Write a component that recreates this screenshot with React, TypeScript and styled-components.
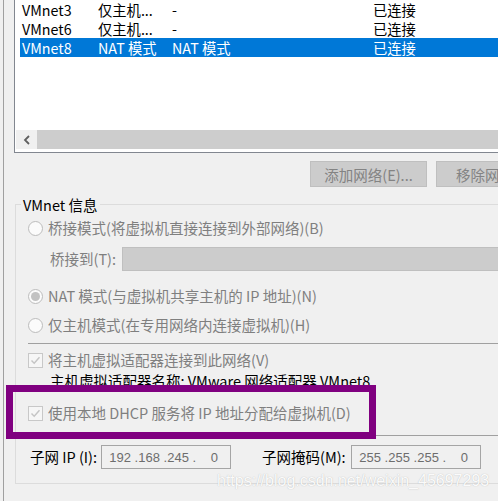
import React from "react";
import styled, { createGlobalStyle } from "styled-components";

const Global = createGlobalStyle`
  html, body { margin: 0; padding: 0; width: 498px; height: 501px; overflow: hidden; background: #f0f0f0; }
  #root { width: 498px; height: 501px; }
  * { box-sizing: border-box; }
`;

const FONT = `"Noto Sans CJK SC", "Microsoft YaHei", sans-serif`;

const Page = styled.div`
  position: relative;
  width: 498px;
  height: 501px;
  overflow: hidden;
  font-family: ${FONT};
  font-size: 14.5px;
  color: #000;
  background: #f0f0f0;
`;

const Frame = styled.div`
  margin-left: 3px;
  height: 501px;
  border-left: 1px solid #a0a0a0;
  display: flex;
  flex-direction: column;
`;

/* ---------- list view ---------- */
const ListBox = styled.div`
  flex: none;
  margin-left: 10px;
  width: 520px;
  height: 153px;
  background: #fff;
  border-left: 1px solid #828790;
  border-bottom: 1px solid #828790;
  display: flex;
  flex-direction: column;
  padding-bottom: 3px;
`;

const ListRows = styled.div`
  display: flex;
  flex-direction: column;
  padding-left: 5px;
`;

const ListRow = styled.div<{ $selected?: boolean }>`
  display: flex;
  align-items: center;
  height: 19px;
  line-height: 19px;
  font-size: 14.3px;
  white-space: nowrap;
  background: ${(p) => (p.$selected ? "#0078d7" : "transparent")};
  color: ${(p) => (p.$selected ? "#ffffff" : "#000000")};
`;

const Cell = styled.div<{ $w: number }>`
  flex: none;
  width: ${(p) => p.$w}px;
  padding-left: 2px;
  overflow: hidden;
`;

const HScroll = styled.div`
  margin-top: auto;
  margin-left: 1px;
  height: 19px;
  display: flex;
`;

const ScrollArrow = styled.div`
  width: 21px;
  background: #f0f0f0;
  display: flex;
  align-items: center;
  justify-content: center;
`;

const ScrollTrack = styled.div`
  flex: 1;
  background: #cdcdcd;
`;

/* ---------- buttons ---------- */
const ButtonRow = styled.div`
  flex: none;
  display: flex;
  gap: 9px;
  margin-top: 8px;
  padding-left: 306px;
`;

const Btn = styled.div`
  flex: none;
  width: 117px;
  height: 26px;
  background: #cccccc;
  border: 1px solid #bfbfbf;
  color: #838383;
  display: flex;
  align-items: center;
  justify-content: center;
  white-space: nowrap;
`;

/* ---------- group box ---------- */
const GroupBox = styled.div`
  flex: none;
  margin-top: 17px;
  margin-left: 11px;
  width: 520px;
  height: 280px;
  border: 1px solid #dcdcdc;
  display: flex;
  flex-direction: column;
`;

const Caption = styled.div`
  align-self: flex-start;
  margin-top: -10px;
  margin-left: 5px;
  padding: 0 2px;
  height: 20px;
  line-height: 20px;
  background: #f0f0f0;
  color: #000;
  white-space: nowrap;
`;

const Row = styled.div<{ $h?: number; $mt: number; $pl: number }>`
  flex: none;
  display: flex;
  align-items: center;
  height: ${(p) => p.$h ?? 20}px;
  margin-top: ${(p) => p.$mt}px;
  padding-left: ${(p) => p.$pl}px;
  white-space: nowrap;
`;

const Label = styled.span<{ $dim?: boolean; $w?: number }>`
  color: ${(p) => (p.$dim ? "#7f7f7f" : "#000")};
  ${(p) => (p.$w ? `width: ${p.$w}px; flex: none;` : "")}
  line-height: 20px;
`;

const RadioCircle = styled.span<{ $checked?: boolean }>`
  flex: none;
  width: 15px;
  height: 15px;
  margin-right: 5px;
  border-radius: 50%;
  border: 1px solid #bcbcbc;
  background: #fbfbfb;
  display: flex;
  align-items: center;
  justify-content: center;
  &::after {
    content: "";
    width: 9px;
    height: 9px;
    border-radius: 50%;
    background: ${(p) => (p.$checked ? "#c2c2c2" : "transparent")};
  }
`;

const CheckBoxBox = styled.span`
  flex: none;
  width: 15px;
  height: 15px;
  margin-right: 5px;
  border: 1px solid #c8c8c8;
  background: #f6f6f6;
  display: flex;
  align-items: center;
  justify-content: center;
`;

const Combo = styled.div`
  flex: none;
  width: 400px;
  height: 24px;
  background: #cccccc;
  border: 1px solid #bfbfbf;
`;

const Separator = styled.div<{ $mt: number }>`
  flex: none;
  margin-top: ${(p) => p.$mt}px;
  margin-left: 12px;
  height: 1px;
  background: #a0a0a0;
`;

const IpBox = styled.div`
  flex: none;
  width: 130px;
  height: 24px;
  border: 1px solid #a5a5a5;
  background: #f0f0f0;
  display: flex;
  align-items: center;
  padding-left: 7px;
  font-family: "Liberation Sans", Arial, sans-serif;
  font-size: 13px;
  color: #6d6d6d;
`;

const IpField = styled.span`
  flex: none;
  width: 22px;
  text-align: right;
`;

const IpDot = styled.span`
  flex: none;
  width: 7px;
  text-align: right;
`;

const Gap = styled.span<{ $w: number }>`
  flex: none;
  width: ${(p) => p.$w}px;
`;

/* ---------- overlays ---------- */
const Highlight = styled.div`
  position: absolute;
  left: 6px;
  top: 385px;
  width: 370px;
  height: 54px;
  border: 7px solid #800080;
  pointer-events: none;
`;

const Watermark = styled.div`
  position: absolute;
  left: 217px;
  top: 472px;
  font-family: "Liberation Sans", Arial, sans-serif;
  font-size: 16px;
  line-height: 18px;
  color: rgba(255, 255, 255, 0.95);
  text-shadow: 0 0 1px rgba(140, 140, 140, 0.6);
  white-space: nowrap;
`;

const Check = () => (
  <svg width="11" height="11" viewBox="0 0 11 11">
    <polyline points="1.5,5.5 4.2,8.3 9.5,2.2" fill="none" stroke="#c4c4c4" strokeWidth="1.4" />
  </svg>
);

const Chevron = () => (
  <svg width="8" height="10" viewBox="0 0 8 10">
    <polyline points="6,1 2,5 6,9" fill="none" stroke="#606060" strokeWidth="1.8" />
  </svg>
);

const rows = [
  { name: "VMnet3", type: "仅主机...", ext: "-", status: "已连接" },
  { name: "VMnet6", type: "仅主机...", ext: "-", status: "已连接" },
  { name: "VMnet8", type: "NAT 模式", ext: "NAT 模式", status: "已连接", selected: true },
];

const Ip = ({ parts }: { parts: string[] }) => (
  <IpBox>
    {parts.map((p, i) => (
      <React.Fragment key={i}>
        <IpField>{p}</IpField>
        {i < parts.length - 1 && <IpDot>.</IpDot>}
      </React.Fragment>
    ))}
  </IpBox>
);

export default function App() {
  return (
    <>
      <Global />
      <Page>
        <Frame>
          <ListBox>
            <ListRows>
              {rows.map((r) => (
                <ListRow key={r.name} $selected={r.selected}>
                  <Cell $w={76}>{r.name}</Cell>
                  <Cell $w={74}>{r.type}</Cell>
                  <Cell $w={201}>{r.ext}</Cell>
                  <Cell $w={120}>{r.status}</Cell>
                </ListRow>
              ))}
            </ListRows>
            <HScroll>
              <ScrollArrow>
                <Chevron />
              </ScrollArrow>
              <ScrollTrack />
            </HScroll>
          </ListBox>

          <ButtonRow>
            <Btn>添加网络(E)...</Btn>
            <Btn>移除网络(R)</Btn>
          </ButtonRow>

          <GroupBox>
            <Caption>VMnet 信息</Caption>

            <Row $mt={3} $pl={12}>
              <RadioCircle />
              <Label $dim>桥接模式(将虚拟机直接连接到外部网络)(B)</Label>
            </Row>

            <Row $h={24} $mt={9} $pl={34}>
              <Label $dim $w={72}>桥接到(T):</Label>
              <Combo />
            </Row>

            <Row $mt={15} $pl={12}>
              <RadioCircle $checked />
              <Label $dim>NAT 模式(与虚拟机共享主机的 IP 地址)(N)</Label>
            </Row>

            <Row $mt={9} $pl={12}>
              <RadioCircle />
              <Label $dim>仅主机模式(在专用网络内连接虚拟机)(H)</Label>
            </Row>

            <Separator $mt={8} />

            <Row $mt={6} $pl={12}>
              <CheckBoxBox>
                <Check />
              </CheckBoxBox>
              <Label $dim>将主机虚拟适配器连接到此网络(V)</Label>
            </Row>

            <Row $mt={1} $pl={34}>
              <Label>主机虚拟适配器名称: VMware 网络适配器 VMnet8</Label>
            </Row>

            <Row $mt={12} $pl={12}>
              <CheckBoxBox>
                <Check />
              </CheckBoxBox>
              <Label $dim>使用本地 DHCP 服务将 IP 地址分配给虚拟机(D)</Label>
            </Row>

            <Separator $mt={12} />

            <Row $h={24} $mt={9} $pl={14}>
              <Label $w={71}>子网 IP (I):</Label>
              <Ip parts={["192", "168", "245", "0"]} />
              <Gap $w={31} />
              <Label $w={89}>子网掩码(M):</Label>
              <Ip parts={["255", "255", "255", "0"]} />
            </Row>
          </GroupBox>
        </Frame>

        <Highlight />
        <Watermark>https://blog.csdn.net/weixin_45697293</Watermark>
      </Page>
    </>
  );
}
